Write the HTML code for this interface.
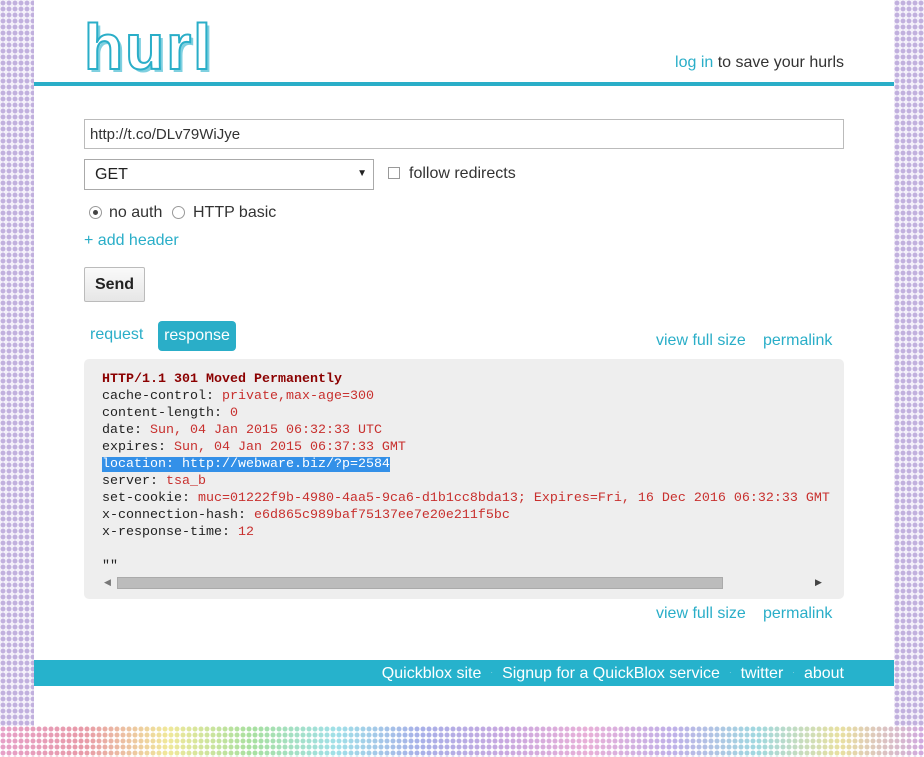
<!DOCTYPE html>
<html><head><meta charset="utf-8"><style>
*{margin:0;padding:0;box-sizing:border-box}
body{width:924px;height:757px;overflow:hidden;position:relative;font-family:"Liberation Sans",Arial,sans-serif;background:#fff}
.dots{position:absolute;background-image:radial-gradient(circle,rgba(180,160,215,.8) 2.2px,transparent 2.6px);background-size:6px 6px}
.dl{left:0;top:0;width:34px;height:757px;background-color:#f4f0fa}
.dr{left:894px;top:0;width:30px;height:757px;background-color:#f4f0fa}
.db{left:0;top:726px;width:924px;height:31px;background-image:radial-gradient(circle,rgba(255,255,255,0) 2.2px,#fff 2.8px),linear-gradient(90deg,#e6a0c8,#e89aa8,#f0e89a,#a8e0a0,#a0e0e8,#a8b0e8,#c8a8e0,#e8b0d8,#c0b0e8,#a0d8e0,#e8e0a0,#d0a8e0);background-size:6px 6px,100% 100%}
.page{position:absolute;left:34px;top:0;width:860px;height:726px;background:#fff}
.logo{position:absolute;left:50px;top:10px;font:bold 64px "Liberation Sans",sans-serif;color:#fff;-webkit-text-stroke:2px #2aaec8;letter-spacing:2px;text-shadow:3px 3px 0 #7fd0e0}
.login{position:absolute;right:50px;top:54px;font-size:16px;color:#333}
.login a{color:#2aaec8;text-decoration:none}
.hr{position:absolute;left:0;top:82px;width:860px;height:4px;background:#2aaec8}
.url{position:absolute;left:50px;top:119px;width:760px;height:30px;border:1px solid #bbb;font-size:15px;padding:6px 5px;color:#333}
.sel{position:absolute;left:50px;top:159px;width:290px;height:31px;border:1px solid #aaa;font-size:16px;padding:6px 10px;color:#222}
.sel span{position:absolute;right:6px;top:8px;font-size:10px}
.cb{position:absolute;width:12px;height:12px;border:1px solid #999;background:#fff}
.t{position:absolute;font-size:16px;color:#333}
.rad{position:absolute;width:13px;height:13px;border:1px solid #999;border-radius:50%;background:#fff}
.send{position:absolute;left:50px;top:267px;width:61px;height:35px;border:1px solid #bbb;background:linear-gradient(#fafafa,#e6e6e6);font:bold 16px "Liberation Sans",sans-serif;text-align:center;line-height:33px;color:#222;border-radius:2px}
.lnk{position:absolute;font-size:16px;color:#2aaec8}
.tab{position:absolute;left:124px;top:321px;width:78px;height:30px;background:#2aaec8;color:#fff;border-radius:4px;font-size:16px;text-align:center;line-height:29px}
.pre{position:absolute;left:50px;top:359px;width:760px;height:240px;background:#eee;border-radius:5px;overflow:hidden}
.code{position:absolute;left:18px;top:12px;font:13.33px/17px "Liberation Mono","Courier New",monospace;color:#222;white-space:pre}
.r{color:#c8302e}
.sb{position:absolute;left:0;top:216px;width:760px;height:16px}
.foot{position:absolute;left:0;top:660px;width:860px;height:26px;background:#26b2cc;color:#fff;font-size:16px;text-align:right;padding-right:50px;line-height:25px}
.foot i{font-style:normal;color:#8fd6e4;font-size:8px;margin:0 9px;vertical-align:3px}
</style></head><body>
<div class="dots dl"></div><div class="dots dr"></div><div class="dots db"></div>
<div class="page">
<div class="logo">hurl</div>
<div class="login"><a>log in</a> to save your hurls</div>
<div class="hr"></div>
<div class="url">http://t.co/DLv79WiJye</div>
<div class="sel">GET<span>▼</span></div>
<div class="cb" style="left:354px;top:167px"></div>
<div class="t" style="left:375px;top:165px">follow redirects</div>
<div class="rad" style="left:55px;top:206px"><div style="width:5px;height:5px;border-radius:50%;background:#444;margin:3px"></div></div>
<div class="t" style="left:75px;top:204px">no auth</div>
<div class="rad" style="left:138px;top:206px"></div>
<div class="t" style="left:159px;top:204px">HTTP basic</div>
<div class="lnk" style="left:50px;top:232px">+ add header</div>
<div class="send">Send</div>
<div class="lnk" style="left:56px;top:326px">request</div>
<div class="tab">response</div>
<div class="lnk" style="left:622px;top:332px">view full size</div>
<div class="lnk" style="left:729px;top:332px">permalink</div>
<div class="pre"><div class="code"><b class="r" style="color:#8b0000">HTTP/1.1 301 Moved Permanently</b>
cache-control: <span class="r">private,max-age=300</span>
content-length: <span class="r">0</span>
date: <span class="r">Sun, 04 Jan 2015 06:32:33 UTC</span>
expires: <span class="r">Sun, 04 Jan 2015 06:37:33 GMT</span>
<span style="background:#3390e8;color:#fff">location: http://webware.biz/?p=2584</span>
server: <span class="r">tsa_b</span>
set-cookie: <span class="r">muc=01222f9b-4980-4aa5-9ca6-d1b1cc8bda13; Expires=Fri, 16 Dec 2016 06:32:33 GMT</span>
x-connection-hash: <span class="r">e6d865c989baf75137ee7e20e211f5bc</span>
x-response-time: <span class="r">12</span>

""</div>
<div class="sb"><span style="position:absolute;left:20px;top:2px;font-size:9px;color:#777">◀</span><div style="position:absolute;left:33px;top:2px;width:606px;height:12px;background:#bcbcbc;border:1px solid #aaa"></div><span style="position:absolute;left:731px;top:2px;font-size:9px;color:#444">▶</span></div>
</div>
<div class="lnk" style="left:622px;top:605px">view full size</div>
<div class="lnk" style="left:729px;top:605px">permalink</div>
<div class="foot">Quickblox site<i>·</i>Signup for a QuickBlox service<i>·</i>twitter<i>·</i>about</div>
</div>
</body></html>
